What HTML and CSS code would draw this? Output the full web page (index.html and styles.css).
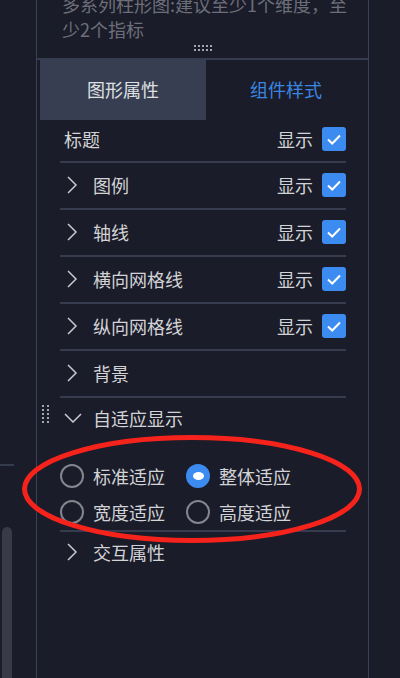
FILE: index.html
```html
<!DOCTYPE html>
<html>
<head>
    <meta charset="utf-8">
    <title>图形属性</title>
    <link rel="stylesheet" href="styles.css">
</head>
<body>
<div class="page">
    <!-- left neighbour pane, only its edge is visible -->
    <div class="gutter">
        <div class="gutter-line"></div>
        <div class="scrollbar"></div>
    </div>

    <div class="panel">
        <div class="hint">
            <p>多系列柱形图:建议至少1个维度，至少2个指标</p>
            <div class="drag-dots"><i></i><i></i><i></i><i></i><i></i><i></i><i></i><i></i><i></i><i></i></div>
        </div>

        <div class="tabs">
            <div class="tab active">图形属性</div>
            <div class="tab">组件样式</div>
        </div>

        <div class="rows">
            <div class="row first">
                <span class="label">标题</span>
                <span class="show">显示</span>
                <span class="check"><svg viewBox="0 0 24 24"><path d="M6 12.5l4.2 4L18 8.5"/></svg></span>
            </div>
            <div class="row">
                <span class="chev"><svg viewBox="0 0 12 18"><path d="M2 1l8 8-8 8"/></svg></span>
                <span class="label">图例</span>
                <span class="show">显示</span>
                <span class="check"><svg viewBox="0 0 24 24"><path d="M6 12.5l4.2 4L18 8.5"/></svg></span>
            </div>
            <div class="row">
                <span class="chev"><svg viewBox="0 0 12 18"><path d="M2 1l8 8-8 8"/></svg></span>
                <span class="label">轴线</span>
                <span class="show">显示</span>
                <span class="check"><svg viewBox="0 0 24 24"><path d="M6 12.5l4.2 4L18 8.5"/></svg></span>
            </div>
            <div class="row">
                <span class="chev"><svg viewBox="0 0 12 18"><path d="M2 1l8 8-8 8"/></svg></span>
                <span class="label">横向网格线</span>
                <span class="show">显示</span>
                <span class="check"><svg viewBox="0 0 24 24"><path d="M6 12.5l4.2 4L18 8.5"/></svg></span>
            </div>
            <div class="row">
                <span class="chev"><svg viewBox="0 0 12 18"><path d="M2 1l8 8-8 8"/></svg></span>
                <span class="label">纵向网格线</span>
                <span class="show">显示</span>
                <span class="check"><svg viewBox="0 0 24 24"><path d="M6 12.5l4.2 4L18 8.5"/></svg></span>
            </div>
            <div class="row">
                <span class="chev"><svg viewBox="0 0 12 18"><path d="M2 1l8 8-8 8"/></svg></span>
                <span class="label">背景</span>
            </div>

            <div class="group">
                <div class="row open">
                    <span class="grip"><i></i><i></i><i></i><i></i><i></i><i></i><i></i><i></i><i></i><i></i></span>
                    <span class="chev down"><svg viewBox="0 0 18 10"><path d="M1 1l8 8 8-8"/></svg></span>
                    <span class="label">自适应显示</span>
                </div>
                <div class="radios">
                    <label class="radio"><span class="dot"></span>标准适应</label>
                    <label class="radio on"><span class="dot"></span>整体适应</label>
                    <label class="radio"><span class="dot"></span>宽度适应</label>
                    <label class="radio"><span class="dot"></span>高度适应</label>
                </div>
            </div>

            <div class="row last">
                <span class="chev"><svg viewBox="0 0 12 18"><path d="M2 1l8 8-8 8"/></svg></span>
                <span class="label">交互属性</span>
            </div>
        </div>
    </div>

    <div class="gutter-right"></div>

    <!-- red annotation ring drawn over the radio group -->
    <svg class="mark" viewBox="0 0 350 116">
        <ellipse cx="175" cy="58" rx="167.5" ry="51.5"/>
    </svg>
</div>
</body>
</html>
```

FILE: styles.css
```css
/* Reset */
body, p {
    margin: 0;
    padding: 0;
}

body {
    background-color: #1b1c29;
    font-family: "Noto Sans CJK SC", "Noto Sans", sans-serif;
    color: #d2d3d6;
}

.page {
    position: relative;
    display: flex;
    width: 400px;
    height: 678px;
    overflow: hidden;
}

/* Left neighbour pane */
.gutter {
    width: 36px;
    display: flex;
    flex-direction: column;
}

.gutter-line {
    margin-top: 464px;
    width: 14px;
    height: 2px;
    background-color: #353a4c;
}

.scrollbar {
    margin: 61px 0 0 2px;
    width: 10px;
    flex: 1;
    background-color: #393a48;
    border-radius: 5px 5px 0 0;
}

/* Main panel */
.panel {
    width: 331px;
    border-left: 1px solid #3a4057;
    border-right: 1px solid #3a4057;
    display: flex;
    flex-direction: column;
}

.gutter-right {
    flex: 1;
}

.hint {
    height: 58px;
    border-bottom: 2px solid #363c50;
    display: flex;
    flex-direction: column;
}

.hint p {
    margin: -8px 0 0 25px;
    width: 292px;
    font-size: 18px;
    line-height: 25px;
    color: #6c6f7a;
}

.drag-dots {
    margin: 3px 0 0 157px;
    width: 18px;
    display: grid;
    grid-template-columns: repeat(5, 2px);
    gap: 2px 2px;
}

.drag-dots i,
.grip i {
    width: 2px;
    height: 2px;
    background-color: #a3a5ac;
}

/* Tabs */
.tabs {
    display: grid;
    grid-template-columns: 166px 1fr;
    padding: 0 2px 0 3px;
    height: 60px;
}

.tab {
    display: flex;
    align-items: center;
    justify-content: center;
    font-size: 18px;
    color: #3a86e2;
    padding-bottom: 2px;
}

.tab.active {
    background-color: #373e52;
    color: #dfe0e2;
}

/* Property rows */
.rows {
    padding: 0 22px 0 23px;
}

.row {
    position: relative;
    box-sizing: border-box;
    display: flex;
    align-items: center;
    height: 47px;
    padding-bottom: 2px;
    border-bottom: 2px solid #363b4e;
    font-size: 18px;
}

.row.first {
    height: 43px;
    padding-bottom: 3px;
}

.row.first .label {
    margin-left: 4px;
}

.label {
    flex: 1;
}

.chev {
    box-sizing: border-box;
    width: 33px;
    display: flex;
    padding-left: 6px;
}

.chev svg {
    width: 12px;
    height: 18px;
}

.chev.down {
    padding-left: 4px;
}

.chev.down svg {
    width: 18px;
    height: 10px;
}

.chev path {
    fill: none;
    stroke: #c9cacd;
    stroke-width: 1.5;
}

.show {
    margin-right: 9px;
}

.check {
    width: 24px;
    height: 24px;
    border-radius: 3px;
    background-color: #3c8bf0;
    display: flex;
}

.check svg {
    width: 24px;
    height: 24px;
}

.check path {
    fill: none;
    stroke: #fff;
    stroke-width: 2;
}

/* Collapsible group with radios */
.group {
    border-bottom: 2px solid #363b4e;
}

.row.open {
    border-bottom: none;
    height: 40px;
    padding-bottom: 0;
}

.grip {
    position: absolute;
    left: -18px;
    top: 7px;
    display: grid;
    grid-template-columns: 2px 2px;
    gap: 2px 3px;
}

.radios {
    display: grid;
    grid-template-columns: 126px 1fr;
    row-gap: 10px;
    padding: 25px 0 5px;
}

.radio {
    display: flex;
    align-items: center;
    gap: 9px;
    font-size: 18px;
    height: 26px;
}

.dot {
    width: 20px;
    height: 20px;
    border: 2px solid #83868f;
    border-radius: 50%;
    display: flex;
    align-items: center;
    justify-content: center;
}

.radio.on .dot {
    border-color: #3c8bf0;
    background-color: #3c8bf0;
}

.radio.on .dot::after {
    content: "";
    width: 11px;
    height: 8px;
    border-radius: 50%;
    background-color: #fff;
}

.row.last {
    border-bottom: none;
    height: 40px;
    padding-bottom: 0;
}

/* Annotation */
.mark {
    position: absolute;
    left: 17px;
    top: 431px;
    width: 350px;
    height: 116px;
}

.mark ellipse {
    fill: none;
    stroke: #f5231c;
    stroke-width: 5;
}
```
